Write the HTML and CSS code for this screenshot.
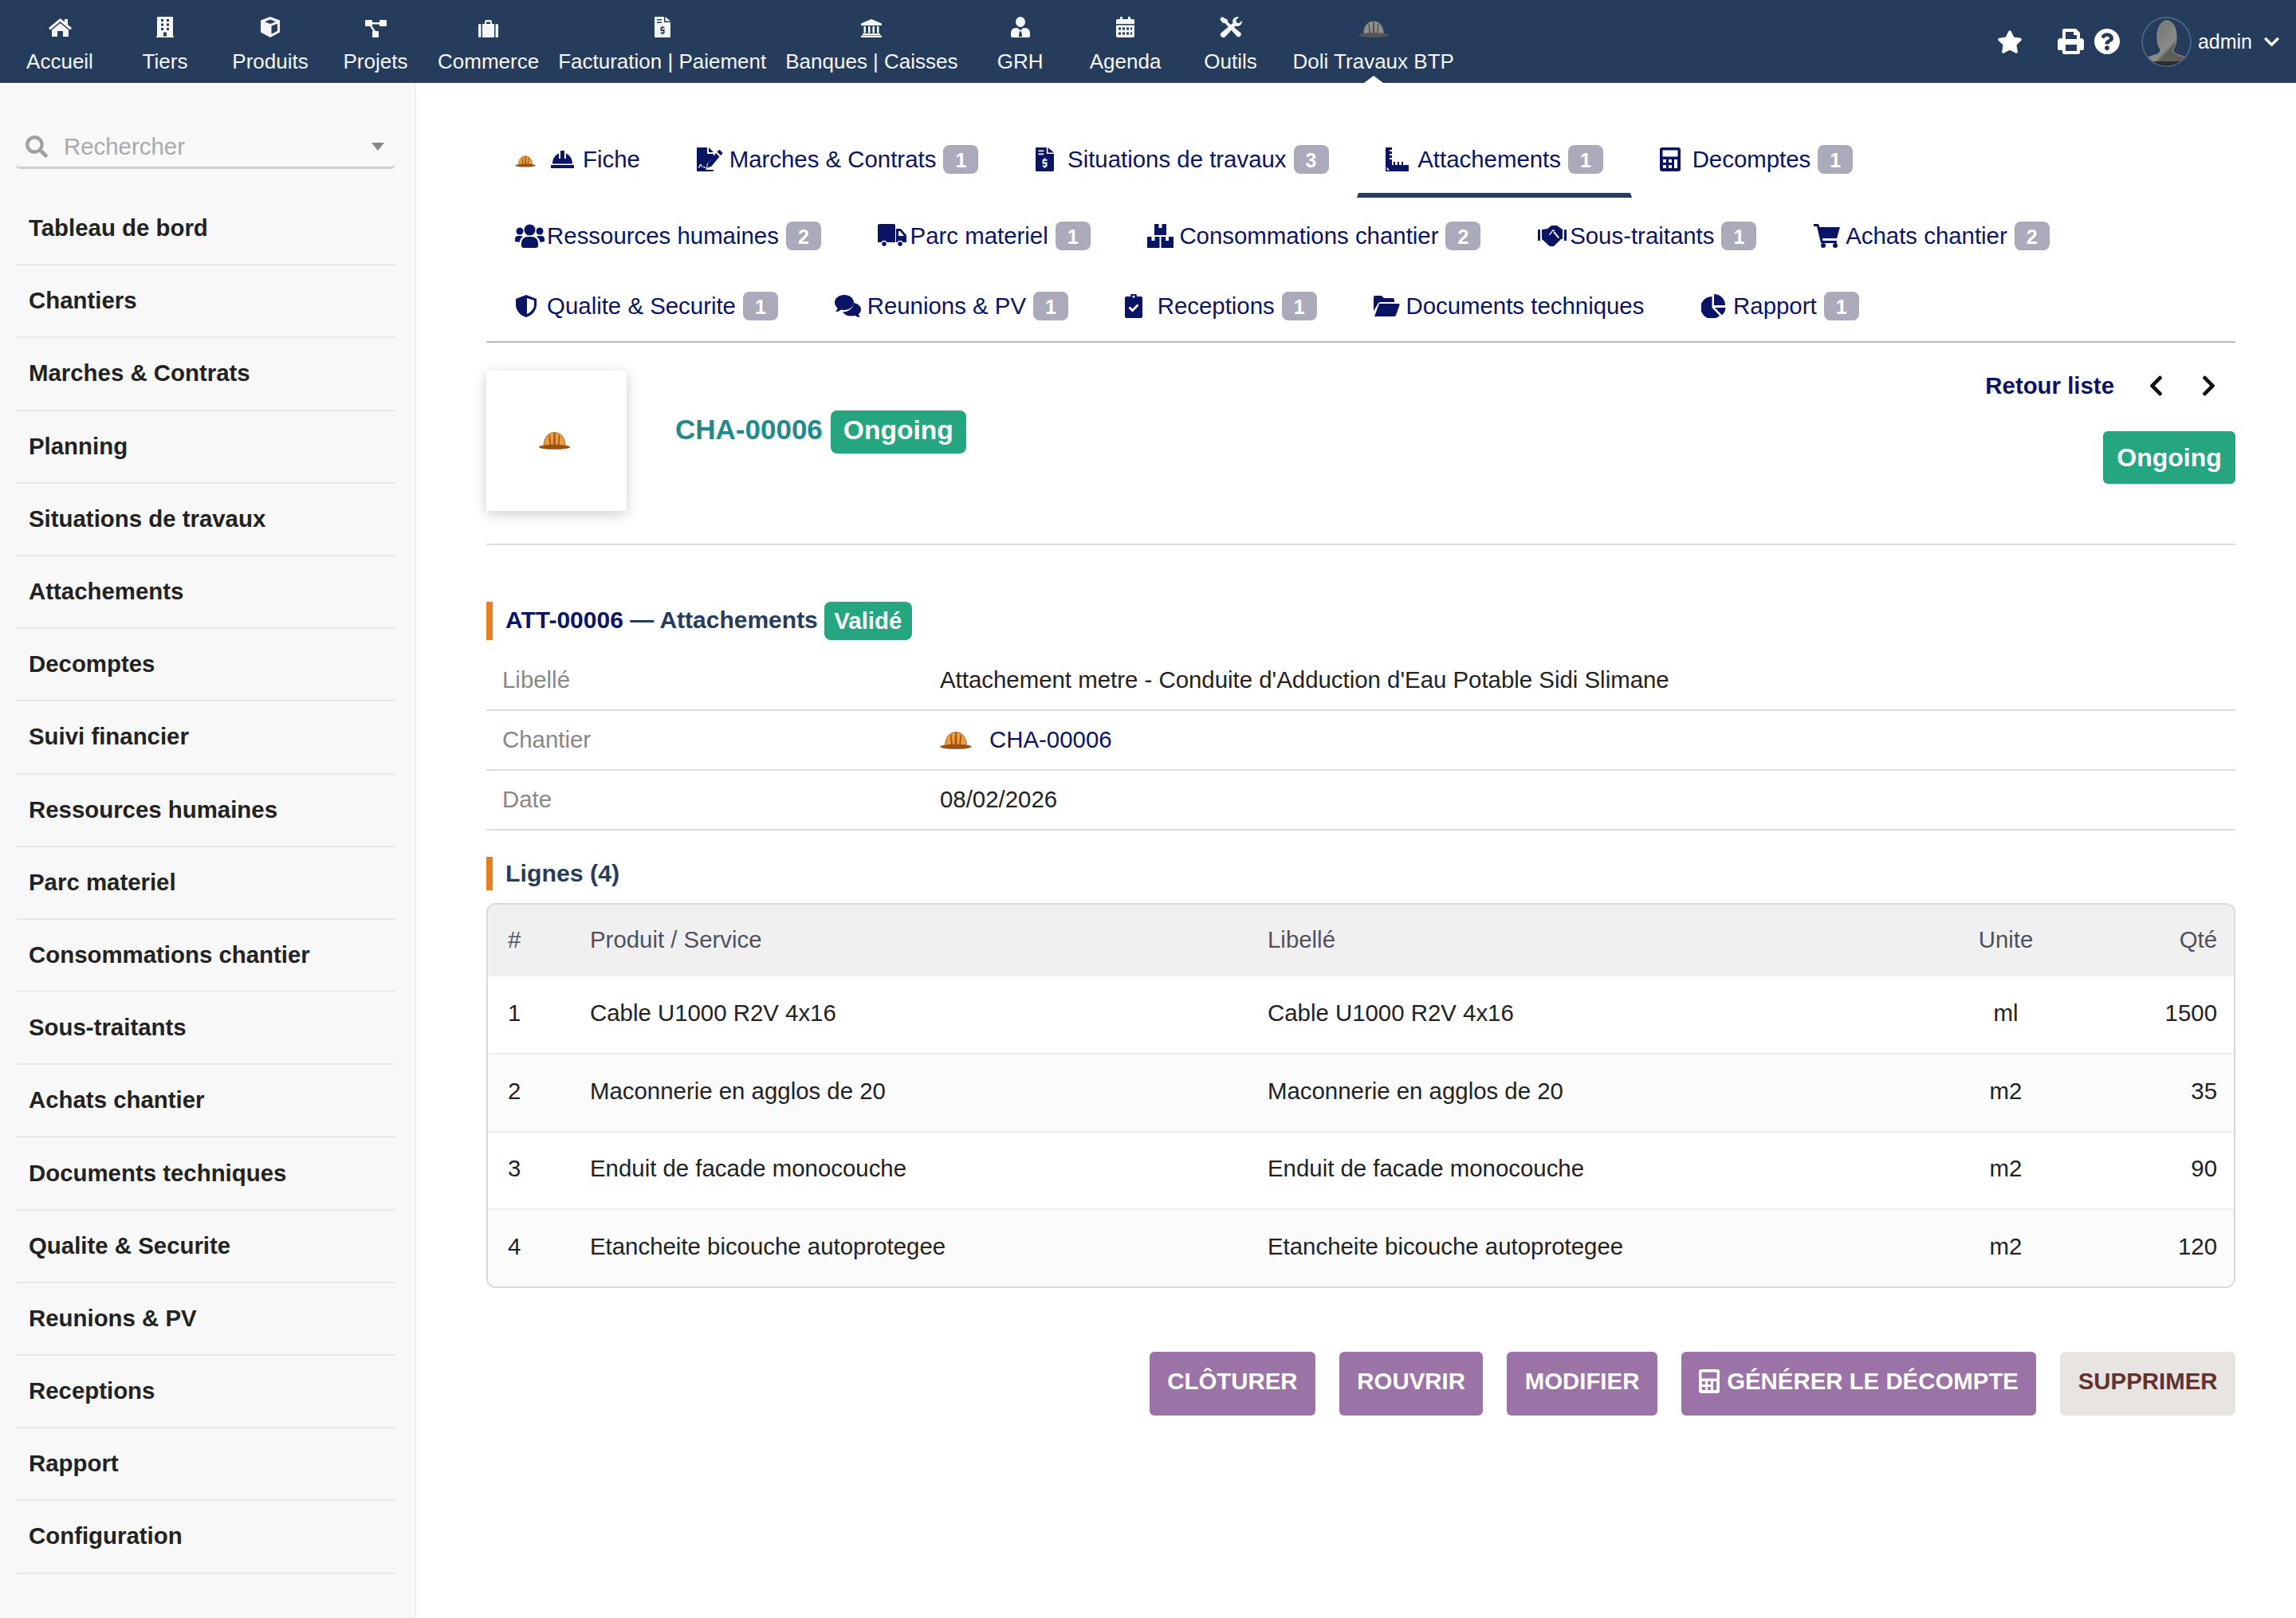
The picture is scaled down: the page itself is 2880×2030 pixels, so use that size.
FILE: index.html
```html
<!DOCTYPE html>
<html lang="fr">
<head>
    <meta charset="UTF-8">
    <title>Doli Travaux BTP - Attachements</title>
    <link rel="stylesheet" href="styles.css">
</head>
<body>
<svg class="sprite" aria-hidden="true">
    <symbol id="i-home" viewBox="0 0 31 25"><path d="M15.5 1L1 13l2 2.500L15.500 5 28 15.500l2-2.500-5-4V2h-4v3.600z"/><path d="M15.500 7L5 15.600V24h7v-7h7v7h7v-8.400z"/></symbol>
    <symbol id="i-building" viewBox="0 0 22 26"><path fill-rule="evenodd" d="M1 24.500V1a1 1 0 0 1 1-1h18a1 1 0 0 1 1 1v23.500h1V26H0v-1.500zM6 3v3h3V3zM13 3v3h3V3zM6 8.500v3h3v-3zM13 8.500v3h3v-3zM6 14v3h3v-3zM13 14v3h3v-3zM9 19.500v5h4v-5z"/></symbol>
    <symbol id="i-cube" viewBox="0 0 28 26"><path fill-rule="evenodd" d="M14 0l12 4.500v15L14 26 2 19.500v-15zM14 3.500L7 6.200l7 2.800 7-2.800zM15.500 11.500v10.300l7.500-4V8.700z"/></symbol>
    <symbol id="i-project" viewBox="0 0 27 22"><path d="M0 1a1 1 0 0 1 1-1h7a1 1 0 0 1 1 1v6a1 1 0 0 1-1 1H1a1 1 0 0 1-1-1zM18 1a1 1 0 0 1 1-1h7a1 1 0 0 1 1 1v6a1 1 0 0 1-1 1h-7a1 1 0 0 1-1-1zM9 15a1 1 0 0 1 1-1h6a1 1 0 0 1 1 1v6a1 1 0 0 1-1 1h-6a1 1 0 0 1-1-1z"/><path d="M9 3h9v2.500H9z"/><path d="M6 8h3l4 6h-3z"/></symbol>
    <symbol id="i-suitcase" viewBox="0 0 25 22"><path d="M8 6V2.500A2.500 2.500 0 0 1 10.500 0h4A2.500 2.500 0 0 1 17 2.500V6h-2V2.500h-5V6z"/><rect y="5" width="3.500" height="17" rx="1.500"/><rect x="5" y="5" width="15" height="17"/><rect x="21.500" y="5" width="3.500" height="17" rx="1.500"/></symbol>
    <symbol id="i-invoice" viewBox="0 0 20 26"><path fill-rule="evenodd" d="M1 0h11v7h8v18a1 1 0 0 1-1 1H1a1 1 0 0 1-1-1V1a1 1 0 0 1 1-1zM3 3v1.500h6V3zM3 6.500V8h6V6.500zM9.300 11.500V13H7.500v5h3.500v1.500H7.500V21h1.800v1.500h1.500V21h1.800v-5H9.100v-1.500h3.500V13h-1.800v-1.500z"/><path d="M13.500 0L20 5.500h-6.500z"/></symbol>
    <symbol id="i-bank" viewBox="0 0 26 23"><path d="M13 0l13 5.500V8H0V5.500zM3.500 9H6v8.500H3.500zM9 9h2.500v8.500H9zM14.500 9H17v8.500h-2.500zM20 9h2.500v8.500H20zM2 18h22v2H2zM0 20.500h26V23H0z"/></symbol>
    <symbol id="i-usertie" viewBox="0 0 24 26"><ellipse cx="12" cy="6.500" rx="6" ry="6.500"/><path fill-rule="evenodd" d="M0 24a2 2 0 0 0 2 2h20a2 2 0 0 0 2-2v-4a6 6 0 0 0-6-6h-2l-4 3-4-3H6a6 6 0 0 0-6 6zM10.800 18.500l-1 6.500h4.400l-1-6.500z"/></symbol>
    <symbol id="i-calendar" viewBox="0 0 23 26"><path d="M0 9V5a2 2 0 0 1 2-2h3V0h3v3h7V0h3v3h3a2 2 0 0 1 2 2v4z"/><path fill-rule="evenodd" d="M0 10.500h23V24a2 2 0 0 1-2 2H2a2 2 0 0 1-2-2zM3 13.500v3h3v-3zM8 13.500v3h3v-3zM13 13.500v3h3v-3zM18 13.500v3h2v-3zM3 19.500v3h3v-3zM8 19.500v3h3v-3zM13 19.500v3h3v-3zM18 19.500v3h2v-3z"/></symbol>
    <symbol id="i-tools" viewBox="0 0 28 26"><path d="M3 0L0 3l4 5h2.500L21 24a2.700 2.700 0 0 0 5-4L10 6.500V4z"/><path d="M22 0a6 6 0 0 0-5.500 8L2 20a3.500 3.500 0 0 0 5 5L19.500 11.500A6 6 0 0 0 27.800 5L24 8.200 21 7.300 20.300 4 24 .4A6 6 0 0 0 22 0z"/></symbol>
    <symbol id="i-hat" viewBox="0 0 40 22"><path class="hat-dome" d="M6.500 18.500C6.500 7 12 .6 20 .6S33.500 7 33.500 18.500z"/><path class="hat-line" d="M13 4.500l1.500-1 1.500 15h-1.800zM19.200.8h1.600l.7 17.700h-3zM25.500 3.500l1.500 1-1.200 14H24z"/><ellipse class="hat-line" cx="20" cy="18.800" rx="19.800" ry="3"/></symbol>
    <symbol id="i-helmet" viewBox="0 0 29 22"><path d="M2 16.500C2 10.500 5 5.500 10 3.500V10h2V1a1 1 0 0 1 1-1h3a1 1 0 0 1 1 1v9h2V3.500c5 2 8 7 8 13zM0 18h29v4H0z"/></symbol>
    <symbol id="i-sign" viewBox="0 0 33 30"><path fill-rule="evenodd" d="M0 1a1 1 0 0 1 1-1h12v8h8v4l-8 8.500-1.500 7.500H21v1a1 1 0 0 1-1 1H1a1 1 0 0 1-1-1zM3 26l2-4 1.500 3 1-1 2 2h1.500v-1.300H10l-1-1.200-1.500 1.200-2-3.700H4l-2.200 4.500z"/><path d="M15 0l6 6h-6zM24 7l4.500 4.500L18 24l-5 1.500 1-5.500zM25.500 5.500l2-2a1.200 1.200 0 0 1 1.700 0l2.800 2.800a1.200 1.200 0 0 1 0 1.700l-2 2z"/></symbol>
    <symbol id="i-ruler" viewBox="0 0 29 30"><path fill-rule="evenodd" d="M0 0h8v3H5v2h3v3H5v2h3v3H5v2h3v7h2v-4h2v4h3v-4h2v4h3v-4h2v4h7v8H0zM1.500 28.500H5l-3.500-4z"/></symbol>
    <symbol id="i-calc" viewBox="0 0 26 30"><path fill-rule="evenodd" d="M3 0h20a3 3 0 0 1 3 3v24a3 3 0 0 1-3 3H3a3 3 0 0 1-3-3V3a3 3 0 0 1 3-3zM3.500 3.500v8h19v-8zM4 15v4h4v-4zM11 15v4h4v-4zM18 15v11h4V15zM4 22v4h4v-4zM11 22v4h4v-4z"/></symbol>
    <symbol id="i-users" viewBox="0 0 37 30"><circle cx="18.500" cy="7.500" r="7"/><circle cx="6" cy="9" r="4.500"/><circle cx="31" cy="9" r="4.500"/><path d="M8 27v-3a8 8 0 0 1 8-8h5a8 8 0 0 1 8 8v3a3 3 0 0 1-3 3H11a3 3 0 0 1-3-3zM0 22v-3a4 4 0 0 1 4-4h4l2 1a10 10 0 0 0-4.500 7zM37 22v-3a4 4 0 0 0-4-4h-4l-2 1a10 10 0 0 1 4.500 7z"/></symbol>
    <symbol id="i-truck" viewBox="0 0 36 30"><path d="M0 2a2 2 0 0 1 2-2h18a2 2 0 0 1 2 2v21H1a1 1 0 0 1-1-1z"/><path fill-rule="evenodd" d="M23 6h5a2 2 0 0 1 1.500.6l6 7a2 2 0 0 1 .5 1.400V23H23zM26 9v6h7l-5-6z"/><circle class="ring" cx="8" cy="25" r="3.500"/><circle class="ring" cx="28" cy="25" r="3.500"/></symbol>
    <symbol id="i-boxes" viewBox="0 0 33 30"><path fill-rule="evenodd" d="M9 1a1 1 0 0 1 1-1h13a1 1 0 0 1 1 1v13H9zM14.500 0v5h4V0zM0 16h15.500v14H0zM5.500 16v5h4v-5zM17.500 16H33v14H17.500zM23 16v5h4v-5z"/></symbol>
    <symbol id="i-shake" viewBox="0 0 36 26"><path d="M0 5h3v14H0zM33 5h3v14h-3z"/><path fill-rule="evenodd" d="M5 5l7-1 5-4h7l7 5v12h-2l-9 9h-5L5 17zM14 11l5-6 2.500 1-2 3 6 7 1.500-1-6-7.500-.5-.5L19 7l-4 5z"/></symbol>
    <symbol id="i-cart" viewBox="0 0 33 30"><path d="M0 0h6l1.500 4H33l-4 14H11l.5 3H29v3H9L4 3H0z"/><circle cx="12" cy="27" r="3"/><circle cx="27" cy="27" r="3"/></symbol>
    <symbol id="i-shield" viewBox="0 0 28 28"><path fill-rule="evenodd" d="M14 0l13 5v7c0 8-6 14-13 16C7 26 1 20 1 12V5zM15 4v20c4-2 9-6 9-12V7z"/></symbol>
    <symbol id="i-comments" viewBox="0 0 33 28"><path d="M20 26.500c-4 0-8-2-10-5 7 0 13-4 14-11.500 5 1 9 4 9 8 0 2.500-1 4.500-3 6 0 1.500 1 3 2 4-2 0-5-.5-6-2-1.500.3-3.500.5-6 .5z"/><path d="M12 0c6.600 0 12 4 12 9.500S18.600 19 12 19c-1.500 0-3-.2-4-.6C6.500 20 4 21 1 21c1.500-1.500 2.300-3 2.500-4.500C1.500 14.600 0 12.200 0 9.500 0 4 5.400 0 12 0z"/></symbol>
    <symbol id="i-clip" viewBox="0 0 22 30"><path fill-rule="evenodd" d="M0 5a2 2 0 0 1 2-2h5a4 4 0 0 1 8 0h5a2 2 0 0 1 2 2v23a2 2 0 0 1-2 2H2a2 2 0 0 1-2-2zM11 1.800a1.500 1.500 0 1 0 .01 0zM4.500 17.500l5 5 8-8-2-2-6 6-3-3z"/></symbol>
    <symbol id="i-folder" viewBox="0 0 33 26"><path d="M0 19V2a2 2 0 0 1 2-2h8l3 3h11a2 2 0 0 1 2 2v3H9a4 4 0 0 0-3.500 2zM7 10h24a1.500 1.500 0 0 1 1.500 2L28 24.500a2 2 0 0 1-2 1.500H1z"/></symbol>
    <symbol id="i-pie" viewBox="0 0 31 30"><path d="M13.500 3v14l9.500 10A14 14 0 1 1 13.500 3zM16 0a14 14 0 0 1 14 14H16zM17 17h13.500a14 14 0 0 1-4.500 9.500z"/></symbol>
    <symbol id="i-print" viewBox="0 0 33 32"><path fill-rule="evenodd" d="M6 2a2 2 0 0 1 2-2h15l5 5v7h1a4 4 0 0 1 4 4v9a2 2 0 0 1-2 2h-3v3a2 2 0 0 1-2 2H8a2 2 0 0 1-2-2v-3H2a2 2 0 0 1-2-2v-9a4 4 0 0 1 4-4h2zM10 4v9h14V8h-4V4zM10 20v8h14v-8z"/></symbol>
    <symbol id="i-star" viewBox="0 0 576 512"><path d="M259.300 17.800L194 150.200 47.900 171.500c-26.200 3.800-36.700 36.100-17.700 54.600l105.700 103-25 145.500c-4.500 26.300 23.200 46 46.400 33.700L288 439.600l130.700 68.700c23.200 12.200 50.900-7.400 46.400-33.700l-25-145.500 105.700-103c19-18.500 8.500-50.800-17.700-54.600L382 150.200 316.700 17.800c-11.700-23.600-45.600-23.900-57.400 0z"/></symbol>
    <symbol id="i-help" viewBox="8 8 496 496"><path d="M504 256c0 136.997-111.043 248-248 248S8 392.997 8 256C8 119.083 119.043 8 256 8s248 111.083 248 248zM262.655 90c-54.497 0-89.255 22.957-116.549 63.758-3.536 5.286-2.353 12.415 2.715 16.258l34.699 26.310c5.205 3.947 12.621 3.008 16.665-2.122 17.864-22.658 30.113-35.797 57.303-35.797 20.429 0 45.698 13.148 45.698 32.958 0 14.976-12.363 22.667-32.534 33.976C247.128 238.528 216 254.941 216 296v4c0 6.627 5.373 12 12 12h56c6.627 0 12-5.373 12-12v-1.333c0-28.462 83.186-29.647 83.186-106.667 0-58.002-60.165-102-116.531-102zM256 338c-25.365 0-46 20.635-46 46 0 25.364 20.635 46 46 46s46-20.636 46-46c0-25.365-20.635-46-46-46z"/></symbol>
    <symbol id="i-down" viewBox="0 100 448 310"><path d="M207.029 381.476L12.686 187.132c-9.373-9.373-9.373-24.569 0-33.941l22.667-22.667c9.357-9.357 24.522-9.375 33.901-.04L224 284.505l154.745-154.021c9.379-9.335 24.544-9.317 33.901.04l22.667 22.667c9.373 9.373 9.373 24.569 0 33.941L240.971 381.476c-9.373 9.372-24.569 9.372-33.942 0z"/></symbol>
    <symbol id="i-left" viewBox="20 30 280 452"><path d="M34.520 239.030L228.870 44.690c9.370-9.370 24.570-9.370 33.940 0l22.670 22.670c9.360 9.360 9.370 24.520.04 33.900L131.490 256l154.020 154.750c9.340 9.380 9.320 24.540-.04 33.900l-22.670 22.670c-9.370 9.370-24.570 9.370-33.940 0L34.520 272.970c-9.370-9.370-9.370-24.570 0-33.940z"/></symbol>
    <symbol id="i-right" viewBox="20 30 280 452"><path d="M285.476 272.971L91.132 467.314c-9.373 9.373-24.569 9.373-33.941 0l-22.667-22.667c-9.357-9.357-9.375-24.522-.04-33.901L188.505 256 34.484 101.255c-9.335-9.379-9.317-24.544.04-33.901l22.667-22.667c9.373-9.373 24.569-9.373 33.941 0L285.475 239.030c9.373 9.372 9.373 24.568.001 33.941z"/></symbol>
    <symbol id="i-search" viewBox="0 0 512 512"><path d="M505 442.700L405.300 343c-4.500-4.500-10.600-7-17-7H372c27.600-35.300 44-79.700 44-128C416 93.100 322.900 0 208 0S0 93.100 0 208s93.100 208 208 208c48.300 0 92.700-16.400 128-44v16.300c0 6.400 2.500 12.500 7 17l99.700 99.700c9.400 9.400 24.600 9.400 33.900 0l28.300-28.300c9.400-9.400 9.400-24.600.1-34zM208 336c-70.700 0-128-57.200-128-128 0-70.700 57.200-128 128-128 70.700 0 128 57.200 128 128 0 70.700-57.200 128-128 128z"/></symbol>
</svg>

<header class="topbar">
    <nav class="topnav">
        <a class="topnav-item"><span class="topnav-ic"><svg width="31" height="25"><use href="#i-home"/></svg></span>Accueil</a>
        <a class="topnav-item"><span class="topnav-ic"><svg width="22" height="26"><use href="#i-building"/></svg></span>Tiers</a>
        <a class="topnav-item"><span class="topnav-ic"><svg width="28" height="26"><use href="#i-cube"/></svg></span>Produits</a>
        <a class="topnav-item"><span class="topnav-ic"><svg width="27" height="22"><use href="#i-project"/></svg></span>Projets</a>
        <a class="topnav-item"><span class="topnav-ic"><svg width="25" height="22"><use href="#i-suitcase"/></svg></span>Commerce</a>
        <a class="topnav-item"><span class="topnav-ic"><svg width="20" height="26"><use href="#i-invoice"/></svg></span>Facturation | Paiement</a>
        <a class="topnav-item"><span class="topnav-ic"><svg width="26" height="23"><use href="#i-bank"/></svg></span>Banques | Caisses</a>
        <a class="topnav-item"><span class="topnav-ic"><svg width="24" height="26"><use href="#i-usertie"/></svg></span>GRH</a>
        <a class="topnav-item"><span class="topnav-ic"><svg width="23" height="26"><use href="#i-calendar"/></svg></span>Agenda</a>
        <a class="topnav-item"><span class="topnav-ic"><svg width="28" height="26"><use href="#i-tools"/></svg></span>Outils</a>
        <a class="topnav-item topnav-item-on"><span class="topnav-ic"><svg class="hat-grey" width="38" height="21"><use href="#i-hat"/></svg></span>Doli Travaux BTP</a>
    </nav>
    <div class="toptools">
        <svg class="tool-star" width="32" height="29"><use href="#i-star"/></svg>
        <svg class="tool-print" width="33" height="32"><use href="#i-print"/></svg>
        <svg class="tool-help" width="32" height="32"><use href="#i-help"/></svg>
        <svg class="avatar" width="63" height="63" viewBox="0 0 63 63">
            <defs>
                <linearGradient id="headgrad" x1="0" y1="0" x2="1" y2="1"><stop offset="0" stop-color="#6d6d6a"/><stop offset=".55" stop-color="#8a8a86"/><stop offset=".6" stop-color="#5e5f58"/></linearGradient>
                <clipPath id="avclip"><circle cx="31.500" cy="31.500" r="30"/></clipPath>
            </defs>
            <circle cx="31.500" cy="31.500" r="30.500" fill="#263c5c" stroke="#4b6180" stroke-width="2"/>
            <g clip-path="url(#avclip)">
                <path d="M5 63v-5c0-6 5-8 12-10 4-1 7-3 7-7-3-4-4-9-4-15 0-13 5-21 12-21s12 8 12 21c0 6-1 11-4 15 0 4 3 6 7 7 7 2 12 4 12 10v5z" fill="url(#headgrad)" stroke="#a9a99e" stroke-width=".8"/>
                <rect y="56" width="63" height="7" fill="#2a2d30"/>
            </g>
        </svg>
        <span class="tool-user">admin</span>
        <svg class="tool-down" width="19" height="13"><use href="#i-down"/></svg>
    </div>
</header>

<div class="layout">
    <aside class="sidebar">
        <div class="search">
            <svg class="search-ic" width="28" height="28"><use href="#i-search"/></svg>
            <span class="search-txt">Rechercher</span>
            <span class="search-arrow"></span>
        </div>
        <ul class="menu">
            <li>Tableau de bord</li>
            <li>Chantiers</li>
            <li>Marches &amp; Contrats</li>
            <li>Planning</li>
            <li>Situations de travaux</li>
            <li>Attachements</li>
            <li>Decomptes</li>
            <li>Suivi financier</li>
            <li>Ressources humaines</li>
            <li>Parc materiel</li>
            <li>Consommations chantier</li>
            <li>Sous-traitants</li>
            <li>Achats chantier</li>
            <li>Documents techniques</li>
            <li>Qualite &amp; Securite</li>
            <li>Reunions &amp; PV</li>
            <li>Receptions</li>
            <li>Rapport</li>
            <li>Configuration</li>
        </ul>
    </aside>

    <main class="content">
        <div class="tabs">
            <a class="tab"><svg class="hat-small" width="26" height="15"><use href="#i-hat"/></svg><span class="tab-ic"><svg width="29" height="22"><use href="#i-helmet"/></svg></span>Fiche</a>
            <a class="tab"><span class="tab-ic"><svg width="33" height="30"><use href="#i-sign"/></svg></span>Marches &amp; Contrats<span class="badge">1</span></a>
            <a class="tab"><span class="tab-ic"><svg width="23" height="30"><use href="#i-invoice"/></svg></span>Situations de travaux<span class="badge">3</span></a>
            <a class="tab tab-on"><span class="tab-ic"><svg width="29" height="30"><use href="#i-ruler"/></svg></span>Attachements<span class="badge">1</span></a>
            <a class="tab"><span class="tab-ic"><svg width="26" height="30"><use href="#i-calc"/></svg></span>Decomptes<span class="badge">1</span></a>
            <a class="tab"><span class="tab-ic"><svg width="37" height="30"><use href="#i-users"/></svg></span>Ressources humaines<span class="badge">2</span></a>
            <a class="tab"><span class="tab-ic"><svg width="36" height="30"><use href="#i-truck"/></svg></span>Parc materiel<span class="badge">1</span></a>
            <a class="tab"><span class="tab-ic"><svg width="33" height="30"><use href="#i-boxes"/></svg></span>Consommations chantier<span class="badge">2</span></a>
            <a class="tab"><span class="tab-ic"><svg width="36" height="26"><use href="#i-shake"/></svg></span>Sous-traitants<span class="badge">1</span></a>
            <a class="tab"><span class="tab-ic"><svg width="33" height="30"><use href="#i-cart"/></svg></span>Achats chantier<span class="badge">2</span></a>
            <a class="tab"><span class="tab-ic"><svg width="28" height="28"><use href="#i-shield"/></svg></span>Qualite &amp; Securite<span class="badge">1</span></a>
            <a class="tab"><span class="tab-ic"><svg width="33" height="28"><use href="#i-comments"/></svg></span>Reunions &amp; PV<span class="badge">1</span></a>
            <a class="tab"><span class="tab-ic"><svg width="22" height="30"><use href="#i-clip"/></svg></span>Receptions<span class="badge">1</span></a>
            <a class="tab"><span class="tab-ic"><svg width="33" height="26"><use href="#i-folder"/></svg></span>Documents techniques</a>
            <a class="tab"><span class="tab-ic"><svg width="31" height="30"><use href="#i-pie"/></svg></span>Rapport<span class="badge">1</span></a>
        </div>

        <div class="head">
            <div class="photo"><svg width="41" height="22"><use href="#i-hat"/></svg></div>
            <div class="head-title">
                <span class="ref">CHA-00006</span>
                <span class="status status-big">Ongoing</span>
            </div>
            <div class="head-right">
                <div class="head-links">
                    <a class="back">Retour liste</a>
                    <svg class="pager" width="17" height="26"><use href="#i-left"/></svg>
                    <svg class="pager" width="17" height="26"><use href="#i-right"/></svg>
                </div>
                <span class="status status-side">Ongoing</span>
            </div>
        </div>

        <h2 class="section">
            <span class="section-text"><span class="section-ref">ATT-00006</span> — Attachements</span>
            <span class="status status-small">Validé</span>
        </h2>
        <div class="fields">
            <div class="field"><span class="field-label">Libellé</span><span>Attachement metre - Conduite d'Adduction d'Eau Potable Sidi Slimane</span></div>
            <div class="field"><span class="field-label">Chantier</span><span class="field-link"><svg width="40" height="22"><use href="#i-hat"/></svg><a>CHA-00006</a></span></div>
            <div class="field"><span class="field-label">Date</span><span>08/02/2026</span></div>
        </div>

        <h2 class="section section-lines">Lignes (4)</h2>
        <div class="lines-wrap">
            <table class="lines">
                <colgroup>
                    <col class="col-num"><col class="col-prod"><col class="col-lib"><col class="col-unit"><col class="col-qty">
                </colgroup>
                <thead>
                    <tr><th>#</th><th>Produit / Service</th><th>Libellé</th><th class="c">Unite</th><th class="r">Qté</th></tr>
                </thead>
                <tbody>
                    <tr><td>1</td><td>Cable U1000 R2V 4x16</td><td>Cable U1000 R2V 4x16</td><td class="c">ml</td><td class="r">1500</td></tr>
                    <tr><td>2</td><td>Maconnerie en agglos de 20</td><td>Maconnerie en agglos de 20</td><td class="c">m2</td><td class="r">35</td></tr>
                    <tr><td>3</td><td>Enduit de facade monocouche</td><td>Enduit de facade monocouche</td><td class="c">m2</td><td class="r">90</td></tr>
                    <tr><td>4</td><td>Etancheite bicouche autoprotegee</td><td>Etancheite bicouche autoprotegee</td><td class="c">m2</td><td class="r">120</td></tr>
                </tbody>
            </table>
        </div>

        <div class="actions">
            <a class="but">Clôturer</a>
            <a class="but">Rouvrir</a>
            <a class="but">Modifier</a>
            <a class="but"><svg class="but-ic" width="26" height="30"><use href="#i-calc"/></svg>Générer le décompte</a>
            <a class="but but-del">Supprimer</a>
        </div>
    </main>
</div>
</body>
</html>
```

FILE: styles.css
```css
* {
    box-sizing: border-box;
}

html, body {
    margin: 0;
    padding: 0;
}

body {
    background: #fff;
    color: #222;
    font-family: "Liberation Sans", Arial, sans-serif;
    font-size: 29.4px;
    min-height: 2030px;
}

a {
    color: inherit;
    text-decoration: none;
}

svg {
    fill: currentColor;
    display: block;
    flex: none;
}

.sprite {
    width: 0;
    height: 0;
    position: absolute;
}

/* hat colours, they go through the use element */
.hat-dome {
    fill: var(--dome, #ee9c40);
    stroke: var(--brim, #9a5212);
    stroke-width: .8;
}

.hat-line {
    fill: var(--brim, #9a5212);
}

.hat-grey {
    --dome: #8f8f8f;
    --brim: #565656;
}

.ring {
    stroke: #fff;
    stroke-width: 1.5;
}

/* top bar */
.topbar {
    height: 104px;
    background: #263c5c;
    color: #fff;
    display: flex;
    justify-content: space-between;
    padding: 0 21px 0 9px;
}

.topnav {
    display: flex;
}

.topnav-item {
    min-width: 132px;
    padding: 21px 12px 0;
    font-size: 26px;
    line-height: 30px;
    text-align: center;
    white-space: nowrap;
    color: #f4f6f8;
    position: relative;
}

.topnav-ic {
    height: 26px;
    margin-bottom: 15px;
    display: flex;
    justify-content: center;
    align-items: flex-end;
}

.topnav-item-on::after {
    content: "";
    position: absolute;
    left: 50%;
    bottom: 0;
    margin-left: -12px;
    border-left: 12px solid transparent;
    border-right: 12px solid transparent;
    border-bottom: 9px solid #fff;
}

.toptools {
    display: flex;
    align-items: center;
}

.tool-star {
    margin-right: 44px;
}

.tool-print {
    margin-right: 13px;
}

.tool-help {
    margin-right: 27px;
}

.tool-user {
    margin-left: 8px;
    margin-right: 15px;
    font-size: 25px;
}

/* left column */
.layout {
    display: flex;
    min-height: 1926px;
}

.sidebar {
    width: 522px;
    flex: none;
    background: #f8f8f8;
    border-right: 2px solid #eee;
    padding: 49px 24px 0 20px;
}

.search {
    height: 59px;
    display: flex;
    align-items: center;
    border-bottom: 3px solid #d0d0d0;
    border-radius: 0 0 6px 6px;
    padding: 6px 14px 0 12px;
    color: #aaa;
}

.search-ic {
    color: #a0a0a0;
}

.search-txt {
    margin-left: 20px;
    flex: 1;
}

.search-arrow {
    border-left: 8px solid transparent;
    border-right: 8px solid transparent;
    border-top: 10px solid #888;
}

.menu {
    list-style: none;
    margin: 30px 0 0;
    padding: 0;
}

.menu li {
    height: 91.2px;
    padding-left: 16px;
    padding-bottom: 1px;
    display: flex;
    align-items: center;
    font-weight: bold;
    border-bottom: 2px solid #e8e8e8;
}

/* main part */
.content {
    flex: 1;
    min-width: 0;
    padding: 52px 76px 0 88px;
}

.tabs {
    display: flex;
    flex-wrap: wrap;
    border-bottom: 2px solid #bbb;
    color: #0a1464;
}

.tab {
    height: 88px;
    padding: 0 35.600px;
    display: flex;
    align-items: center;
    white-space: nowrap;
}

.tab-on {
    height: 92px;
    margin-bottom: 4px;
    padding: 2px 33.600px 0;
    border-bottom: 6px solid #263c5c;
    border-left: 2px solid transparent;
    border-right: 2px solid transparent;
}

.tab-ic {
    width: 40.5px;
    flex: none;
}

.hat-small {
    margin-right: 19px;
    margin-top: 4px;
}

.badge {
    margin-left: 9px;
    width: 44px;
    height: 36px;
    border-radius: 8px;
    background: #aaaabb;
    color: #fff;
    font-size: 25px;
    font-weight: bold;
    display: flex;
    align-items: center;
    justify-content: center;
    padding-top: 2px;
}

.head {
    display: flex;
    margin-top: 35px;
    padding-bottom: 41px;
    border-bottom: 2px solid #ddd;
}

.photo {
    width: 176px;
    height: 176px;
    flex: none;
    background: #fff;
    box-shadow: 0 4px 16px rgba(0, 0, 0, .2);
    display: flex;
    align-items: center;
    justify-content: center;
    padding-right: 5px;
}

.head-title {
    margin-left: 61px;
    padding-top: 50px;
    display: flex;
    align-items: flex-start;
    flex: 1;
}

.ref {
    color: #208a8f;
    font-size: 35px;
    font-weight: bold;
    line-height: 48px;
}

.status {
    background: #25a580;
    color: #fff;
    font-weight: bold;
    display: flex;
    align-items: center;
    justify-content: center;
}

.status-big {
    margin-left: 10px;
    width: 170px;
    height: 54px;
    border-radius: 8px;
    font-size: 33.6px;
    padding-bottom: 4px;
}

.status-side {
    width: 166px;
    height: 66px;
    border-radius: 6px;
    font-size: 32px;
    margin-top: 38px;
}

.status-small {
    margin-left: 8px;
    width: 110px;
    height: 48px;
    border-radius: 8px;
    font-size: 29.4px;
}

.head-right {
    display: flex;
    flex-direction: column;
    align-items: flex-end;
}

.head-links {
    display: flex;
    align-items: center;
    height: 38px;
    color: #0a1464;
}

.back {
    font-weight: bold;
    margin-right: 44px;
}

.pager {
    margin-right: 25px;
    color: #111;
}

.pager + .pager {
    margin-left: 24px;
}

.section {
    margin: 71px 0 0;
    height: 48px;
    border-left: 8px solid #e67e22;
    padding-left: 16px;
    display: flex;
    align-items: center;
    white-space: nowrap;
    font-size: 30px;
    color: #263c5c;
}

.section-text {
    margin-bottom: 2px;
}

.section-ref {
    color: #0a1464;
}

.section-lines {
    margin-top: 33px;
    height: 42px;
    font-size: 30.300px;
}

.fields {
    margin-top: 14px;
}

.field {
    height: 75px;
    padding-bottom: 1px;
    display: flex;
    align-items: center;
    border-bottom: 2px solid #ddd;
}

.field-label {
    width: 569px;
    padding-left: 20px;
    color: #888;
    flex: none;
}

.field-link {
    display: flex;
    align-items: center;
    color: #0a1464;
}

.field-link svg {
    margin-right: 22px;
    margin-top: 2px;
}

.lines-wrap {
    margin-top: 16px;
    border: 2px solid #d8d8d8;
    border-radius: 12px;
    overflow: hidden;
}

.lines {
    width: 100%;
    border-collapse: collapse;
    table-layout: fixed;
}

.col-num { width: 106px; }
.col-prod { width: 850px; }
.col-lib { width: 832px; }
.col-unit { width: 232px; }
.col-qty { width: 170px; }

.lines th {
    height: 90px;
    background: #f0f0f0;
    font-weight: normal;
    text-align: left;
    color: #505060;
    padding: 0 21px 3px 25px;
}

.lines td {
    height: 97.250px;
    padding: 0 21px 4px 25px;
    border-bottom: 2px solid #eee;
}

.lines th:nth-child(n+2),
.lines td:nth-child(n+2) {
    padding-left: 22px;
}

.lines tbody tr:nth-child(even) td {
    background: #fbfbfb;
}

.lines tbody tr:last-child td {
    border-bottom: 0;
}

.lines th.c,
.lines td.c {
    text-align: center;
    padding-left: 0;
    padding-right: 0;
}

.lines th.r,
.lines td.r {
    text-align: right;
}

.actions {
    margin-top: 80px;
    display: flex;
    justify-content: flex-end;
    gap: 29.800px;
}

.but {
    height: 80px;
    padding: 0 22.500px 6px;
    border-radius: 6px;
    background: #9c73a6;
    color: #fff;
    font-weight: bold;
    text-transform: uppercase;
    display: flex;
    align-items: center;
    white-space: nowrap;
}

.but-ic {
    margin-right: 9px;
}

.but-del {
    background: #e8e4e1;
    color: #66302e;
}
```
